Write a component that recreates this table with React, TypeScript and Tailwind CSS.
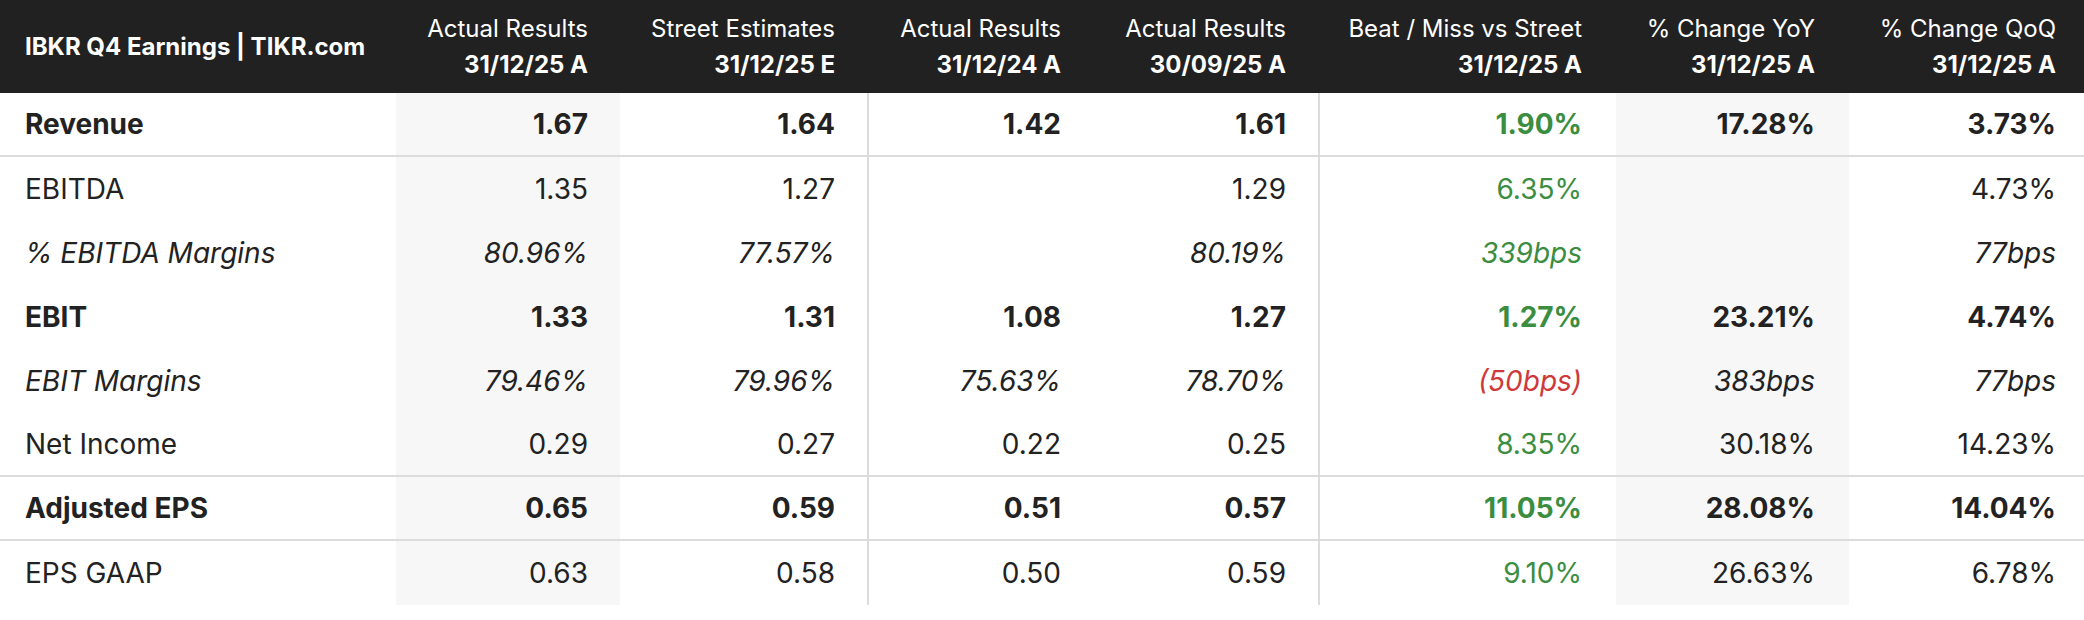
import React from "react";

type Tone = "g" | "r" | "";
type Row = {
  label: string;
  kind: "bold" | "normal" | "italic";
  vals: string[];
  tone: Tone;
  border?: boolean;
};

const rows: Row[] = [
  { label: "Revenue", kind: "bold", vals: ["1.67", "1.64", "1.42", "1.61", "1.90%", "17.28%", "3.73%"], tone: "g", border: true },
  { label: "EBITDA", kind: "normal", vals: ["1.35", "1.27", "", "1.29", "6.35%", "", "4.73%"], tone: "g" },
  { label: "% EBITDA Margins", kind: "italic", vals: ["80.96%", "77.57%", "", "80.19%", "339bps", "", "77bps"], tone: "g" },
  { label: "EBIT", kind: "bold", vals: ["1.33", "1.31", "1.08", "1.27", "1.27%", "23.21%", "4.74%"], tone: "g" },
  { label: "EBIT Margins", kind: "italic", vals: ["79.46%", "79.96%", "75.63%", "78.70%", "(50bps)", "383bps", "77bps"], tone: "r" },
  { label: "Net Income", kind: "normal", vals: ["0.29", "0.27", "0.22", "0.25", "8.35%", "30.18%", "14.23%"], tone: "g", border: true },
  { label: "Adjusted EPS", kind: "bold", vals: ["0.65", "0.59", "0.51", "0.57", "11.05%", "28.08%", "14.04%"], tone: "g", border: true },
  { label: "EPS GAAP", kind: "normal", vals: ["0.63", "0.58", "0.50", "0.59", "9.10%", "26.63%", "6.78%"], tone: "g" },
];

const headers = [
  ["Actual Results", "31/12/25 A"],
  ["Street Estimates", "31/12/25 E"],
  ["Actual Results", "31/12/24 A"],
  ["Actual Results", "30/09/25 A"],
  ["Beat / Miss vs Street", "31/12/25 A"],
  ["% Change YoY", "31/12/25 A"],
  ["% Change QoQ", "31/12/25 A"],
];

const cellCls = [
  "bg-[#f7f7f7] pr-[32px]",
  "pr-[32px]",
  "border-l-2 border-[#dcdcdc] pr-[32px]",
  "pr-[32px]",
  "border-l-2 border-[#dcdcdc] pr-[34px]",
  "bg-[#f7f7f7] pr-[34px]",
  "pr-[28px]",
];

const headCls = ["pr-[32px]", "pr-[32px]", "pr-[32px]", "pr-[32px]", "pr-[34px]", "pr-[34px]", "pr-[28px]"];

const grid = "grid grid-cols-[396px_224px_247px_226px_225px_298px_233px_235px]";

export default function App() {
  return (
    <div
      className="w-[2084px] h-[620px] bg-white text-[#222222]"
      style={{ fontFamily: "Inter, 'Noto Sans', sans-serif" }}
    >
      <div className={`${grid} h-[93px] bg-[#212121] text-white`}>
        <div className="flex items-center pl-[25px] text-[24px] font-bold">
          IBKR Q4 Earnings | TIKR.com
        </div>
        {headers.map((h, i) => (
          <div key={i} className={`flex flex-col justify-center items-end text-[24px] leading-[36px] ${headCls[i]}`}>
            <div className="font-normal">{h[0]}</div>
            <div className="font-bold">{h[1]}</div>
          </div>
        ))}
      </div>
      {rows.map((r, ri) => {
        const weight = r.kind === "bold" ? "font-bold" : "font-normal";
        const ital = r.kind === "italic" ? "italic" : "";
        return (
          <div
            key={ri}
            className={`${grid} h-[64px] text-[28px] ${weight} ${ital} ${r.border ? "border-b-2 border-[#dcdcdc]" : ""}`}
          >
            <div className="flex items-center pl-[25px]">{r.label}</div>
            {r.vals.map((v, ci) => {
              const color =
                ci === 4 ? (r.tone === "r" ? "text-[#d0393a]" : "text-[#3b8d3f]") : "";
              return (
                <div key={ci} className={`flex items-center justify-end ${cellCls[ci]} ${color}`}>
                  {v}
                </div>
              );
            })}
          </div>
        );
      })}
    </div>
  );
}
